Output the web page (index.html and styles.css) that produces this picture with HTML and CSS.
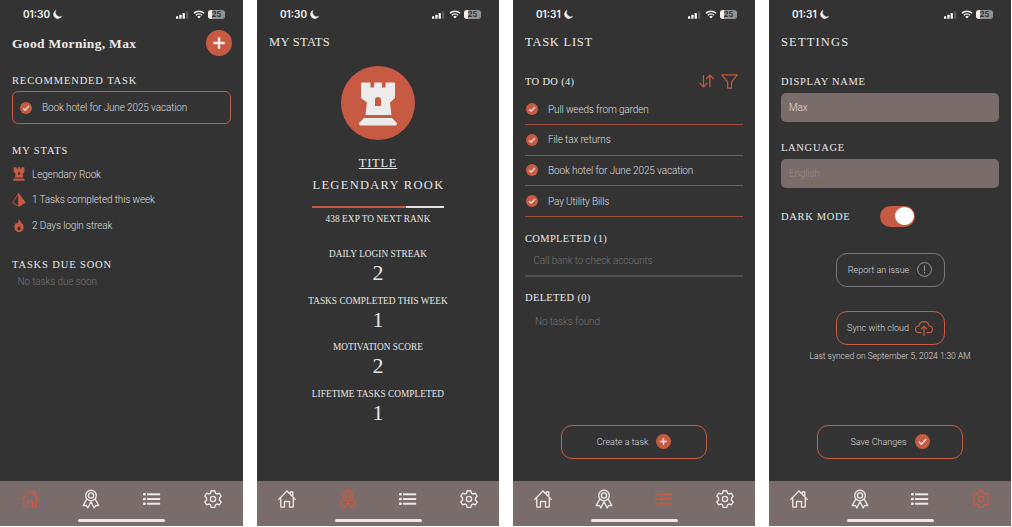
FILE: index.html
```
<!DOCTYPE html>
<html lang="en">
<head>
<meta charset="utf-8">
<title>Task Rook</title>
<link rel="stylesheet" href="styles.css">
</head>
<body>
<svg class="sprite" aria-hidden="true">
  <symbol id="moon" viewBox="0 0 9 9"><path d="M3 .3A4.400 4.400 0 1 0 8.800 6.300 4.400 4.400 0 0 1 3 .3z" fill="currentColor" stroke="currentColor" stroke-width=".4"/></symbol>
  <symbol id="signal" viewBox="0 0 13 8"><g fill="#f4f4f4"><rect x="0" y="5.2" width="2.3" height="2.6" rx=".5"/><rect x="3.3" y="3.8" width="2.3" height="4" rx=".5"/><rect x="6.6" y="2" width="2.3" height="5.8" rx=".5"/></g><rect x="10" y="0" width="2.1" height="7.8" rx=".5" fill="#5c5c5c"/></symbol>
  <symbol id="wifi" viewBox="0 0 12 9"><g fill="none" stroke="#f4f4f4" stroke-width="1.5"><path d="M.9 3.3a7.3 7.3 0 0 1 10.2 0"/><path d="M2.8 5.3a4.6 4.6 0 0 1 6.4 0"/></g><path d="M4.2 6.6a2.6 2.6 0 0 1 3.6 0L6 8.500z" fill="#f4f4f4"/></symbol>
  <symbol id="home" viewBox="0 0 18 18"><path d="M.7 9.400 9 1l8.300 8.400M2.700 7.800v9.300h3.800v-5.600h5v5.600h3.800V7.800M12.300 4V2h2.500v4.600" fill="none" stroke="currentColor" stroke-width="1.350" stroke-linejoin="round" stroke-linecap="round"/></symbol>
  <symbol id="award" viewBox="0 0 18 20"><g fill="none" stroke="currentColor" stroke-width="1.350" stroke-linejoin="round"><circle cx="9" cy="6.500" r="5.300"/><circle cx="9" cy="6.500" r="2.600"/><path d="M4.800 10 1.200 16.600l3.100-.2 1.500 2.600L9 12.800l3.200 6.200 1.500-2.600 3.100.2L13.200 10"/></g></symbol>
  <symbol id="list" viewBox="0 0 18 14"><g fill="currentColor"><rect x="0" y="1" width="2.800" height="2.600" rx=".8"/><rect x="0" y="5.700" width="2.800" height="2.600" rx=".8"/><rect x="0" y="10.400" width="2.800" height="2.600" rx=".8"/><rect x="4" y="1.300" width="13.200" height="2"/><rect x="4" y="6" width="13.200" height="2"/><rect x="4" y="10.700" width="13.200" height="2"/></g></symbol>
  <symbol id="gear" viewBox="0 0 18 18"><g fill="none" stroke="currentColor" stroke-width="1.350" stroke-linejoin="round"><path d="M7.200.7h3.600l.6 2.400 1.500.9 2.400-.9 1.900 3-1.800 1.800v2.200l1.800 1.800-1.900 3-2.400-.9-1.500.9-.6 2.400H7.200l-.6-2.400-1.500-.9-2.400.9-1.900-3 1.800-1.800V7.900L.8 6.100l1.900-3 2.400.9 1.500-.9z"/><circle cx="9" cy="9" r="2.600"/></g></symbol>
  <symbol id="rook" viewBox="0 0 38 44"><path fill="currentColor" fill-rule="evenodd" d="M3 .5h7.500a1 1 0 0 1 1 1V5.500h3.500V1.500a1 1 0 0 1 1-1h6a1 1 0 0 1 1 1V5.500h3.500V1.500a1 1 0 0 1 1-1H35a1 1 0 0 1 1 1V16l-5 4.500L32.500 33H6.500L8 20.500 2 16V1.500a1 1 0 0 1 1-1zM16 24h6v-6a3 3 0 0 0-6 0zM5 36h28l4.600 4.800a1.600 1.600 0 0 1-1.200 2.700H1.600a1.600 1.600 0 0 1-1.200-2.700z"/></symbol>
  <symbol id="pyramid" viewBox="0 0 14 14"><path d="M6.600.5.500 9.700l6.100 3.500z" fill="none" stroke="currentColor" stroke-width=".9" stroke-linejoin="round"/><path d="M6.800.3 13.700 9.500 7 13.700z" fill="currentColor"/></symbol>
  <symbol id="flame" viewBox="0 0 10 13"><path fill="currentColor" fill-rule="evenodd" d="M4.600 0C5.300 2 9.600 4.400 9.600 8.200 9.600 11 7.700 13 5 13S.4 11 .4 8.200C.4 6.200 1.400 4.600 2.300 3.800l.6 1C4 3.600 4.700 1.800 4.600 0zM5 7c-1 1-1.500 1.800-1.500 2.700 0 .9.6 1.600 1.500 1.600s1.500-.7 1.500-1.600C6.500 8.800 6 8 5 7z"/></symbol>
  <symbol id="check" viewBox="0 0 14 14"><circle cx="7" cy="7" r="7" fill="#c65a42"/><path d="m3.700 7.300 2.300 2.200 4.400-4.800" fill="none" stroke="#f3eae7" stroke-width="1.400"/></symbol>
  <symbol id="plus" viewBox="0 0 26 26"><circle cx="13" cy="13" r="13" fill="#c65a42"/><path d="M13 7.300v11.400M7.300 13h11.400" stroke="#f3eae7" stroke-width="2.400"/></symbol>
  <symbol id="sort" viewBox="0 0 16 14"><path d="M4.500 1v11.800M.8 9l3.700 3.800L8.200 9M10.900 13V1.200M7.200 5l3.700-3.800L14.700 5" fill="none" stroke="currentColor" stroke-width="1.200"/></symbol>
  <symbol id="funnel" viewBox="0 0 17 15"><path d="M.8.800h15.400l-5.700 7.300v6H6.700v-6z" fill="none" stroke="currentColor" stroke-width="1.200" stroke-linejoin="round"/></symbol>
  <symbol id="alert" viewBox="0 0 15 15"><circle cx="7.500" cy="7.500" r="6.900" fill="none" stroke="currentColor" stroke-width="1"/><path d="M7.500 3.600v5.300M7.500 10.100v1.300" stroke="currentColor" stroke-width="1.100"/></symbol>
  <symbol id="cloud" viewBox="0 0 18 15"><path d="M6.500 11.700H4A3.300 3.300 0 0 1 3.800 5C4.300 2.400 6.400.7 9 .7s4.700 1.700 5.100 4.300a3.300 3.300 0 0 1-.2 6.700h-2.400M9 14.700V5.500M6 8.300l3-3 3 3" fill="none" stroke="currentColor" stroke-width="1.200"/></symbol>
</svg>

<main class="screens">
  <section class="phone">
    <div class="status"><span class="time">01:30</span><svg class="moon"><use href="#moon"/></svg><span class="status-right"><svg class="signal"><use href="#signal"/></svg><svg class="wifi"><use href="#wifi"/></svg><span class="battery">25</span></span></div>
    <div class="content">
      <header class="greeting"><h1>Good Morning, Max</h1><svg class="add"><use href="#plus"/></svg></header>
      <h2 class="rec-title">RECOMMENDED TASK</h2>
      <div class="rec-card"><svg class="tick"><use href="#check"/></svg><span>Book hotel for June 2025 vacation</span></div>
      <h2 class="stats-title">MY STATS</h2>
      <ul class="stat-list">
        <li><svg class="i-rook" viewBox="0 0 38 44"><use href="#rook"/></svg>Legendary Rook</li>
        <li><svg class="i-pyramid"><use href="#pyramid"/></svg>1 Tasks completed this week</li>
        <li><svg class="i-flame"><use href="#flame"/></svg>2 Days login streak</li>
      </ul>
      <h2 class="due-title">TASKS DUE SOON</h2>
      <p class="due-empty">No tasks due soon</p>
    </div>
    <nav class="tabs"><div class="tab-row"><svg class="active"><use href="#home"/></svg><svg class="award"><use href="#award"/></svg><svg class="list"><use href="#list"/></svg><svg><use href="#gear"/></svg></div><i class="indicator"></i></nav>
  </section>

  <section class="phone">
    <div class="status"><span class="time">01:30</span><svg class="moon"><use href="#moon"/></svg><span class="status-right"><svg class="signal"><use href="#signal"/></svg><svg class="wifi"><use href="#wifi"/></svg><span class="battery">25</span></span></div>
    <div class="content">
      <h1 class="page-title tight">MY STATS</h1>
      <div class="profile">
        <div class="badge"><svg><use href="#rook"/></svg></div>
        <div class="rank-label">TITLE</div>
        <div class="rank">LEGENDARY ROOK</div>
        <div class="progress"><i></i></div>
        <div class="exp">438 EXP TO NEXT RANK</div>
        <dl class="metrics">
          <div><dt>DAILY LOGIN STREAK</dt><dd>2</dd></div>
          <div><dt>TASKS COMPLETED THIS WEEK</dt><dd>1</dd></div>
          <div><dt>MOTIVATION SCORE</dt><dd>2</dd></div>
          <div><dt>LIFETIME TASKS COMPLETED</dt><dd>1</dd></div>
        </dl>
      </div>
    </div>
    <nav class="tabs"><div class="tab-row"><svg><use href="#home"/></svg><svg class="award active"><use href="#award"/></svg><svg class="list"><use href="#list"/></svg><svg><use href="#gear"/></svg></div><i class="indicator"></i></nav>
  </section>

  <section class="phone">
    <div class="status"><span class="time">01:31</span><svg class="moon"><use href="#moon"/></svg><span class="status-right"><svg class="signal"><use href="#signal"/></svg><svg class="wifi"><use href="#wifi"/></svg><span class="battery">25</span></span></div>
    <div class="content">
      <h1 class="page-title">TASK LIST</h1>
      <div class="todo-head"><h2>TO DO (4)</h2><svg class="sort"><use href="#sort"/></svg><svg class="funnel"><use href="#funnel"/></svg></div>
      <ul class="tasks">
        <li><svg class="tick"><use href="#check"/></svg>Pull weeds from garden</li>
        <li><svg class="tick"><use href="#check"/></svg>File tax returns</li>
        <li><svg class="tick"><use href="#check"/></svg>Book hotel for June 2025 vacation</li>
        <li><svg class="tick"><use href="#check"/></svg>Pay Utility Bills</li>
      </ul>
      <h2 class="done-title">COMPLETED (1)</h2>
      <p class="done-item">Call bank to check accounts</p>
      <h2 class="deleted-title">DELETED (0)</h2>
      <p class="deleted-empty">No tasks found</p>
      <button class="btn wide bottom">Create a task<svg><use href="#plus"/></svg></button>
    </div>
    <nav class="tabs"><div class="tab-row"><svg><use href="#home"/></svg><svg class="award"><use href="#award"/></svg><svg class="list active"><use href="#list"/></svg><svg><use href="#gear"/></svg></div><i class="indicator"></i></nav>
  </section>

  <section class="phone">
    <div class="status"><span class="time">01:31</span><svg class="moon"><use href="#moon"/></svg><span class="status-right"><svg class="signal"><use href="#signal"/></svg><svg class="wifi"><use href="#wifi"/></svg><span class="battery">25</span></span></div>
    <div class="content">
      <h1 class="page-title loose">SETTINGS</h1>
      <h2 class="name-label">DISPLAY NAME</h2>
      <div class="field">Max</div>
      <h2 class="lang-label">LANGUAGE</h2>
      <div class="field disabled">English</div>
      <div class="dark-row"><h2>DARK MODE</h2><span class="toggle"><i></i></span></div>
      <button class="btn report">Report an issue<svg><use href="#alert"/></svg></button>
      <button class="btn sync">Sync with cloud<svg class="cloud"><use href="#cloud"/></svg></button>
      <p class="synced">Last synced on September 5, 2024 1:30 AM</p>
      <button class="btn wide bottom">Save Changes<svg><use href="#check"/></svg></button>
    </div>
    <nav class="tabs"><div class="tab-row"><svg><use href="#home"/></svg><svg class="award"><use href="#award"/></svg><svg class="list"><use href="#list"/></svg><svg class="active"><use href="#gear"/></svg></div><i class="indicator"></i></nav>
  </section>
</main>
</body>
</html>
```
FILE: styles.css
```
* { box-sizing: border-box; }
body, h1, h2, p, ul, dl, dd { margin: 0; padding: 0; }
body { background: #fff; overflow: hidden; font-family: Roboto, sans-serif; font-weight: 300; font-size: 10px; letter-spacing: -.13px; color: #dedede; }
ul { list-style: none; }
svg { display: block; flex: none; }
.sprite { display: none; }

.screens { display: grid; grid-template-columns: 243px 242px 242px 242px; gap: 14px; height: 526px; }
.phone { display: flex; flex-direction: column; background: #333; height: 526px; }
.content { flex: 1; min-height: 0; display: flex; flex-direction: column; padding: 0 12px; }

.status { display: flex; align-items: center; height: 29px; padding: 0 18px 0 23px; color: #f6f6f6; }
.time { font: 600 10px/29px Inter, sans-serif; letter-spacing: 0; }
.moon { width: 9px; height: 9px; margin-left: 3px; }
.status-right { display: flex; align-items: center; margin-left: auto; }
.signal { width: 13px; height: 8px; margin-right: 4px; }
.wifi { width: 12px; height: 9px; margin-right: 3px; }
.battery { width: 17px; height: 9px; border-radius: 3px; background: linear-gradient(90deg, #f4f4f4 4px, #929292 4px); color: #333; font: 700 7.500px/9px Inter, sans-serif; text-align: center; }

h1, h2, .profile { font-family: "Liberation Serif", serif; font-weight: 400; }
h2 { font-size: 10.500px; line-height: 14px; letter-spacing: .87px; color: #e8e8e8; }

.greeting { display: flex; align-items: center; justify-content: space-between; height: 26px; margin: 1px -1px 0 0; }
.greeting h1 { padding-top: 1px; font-size: 13.500px; line-height: 16px; font-weight: 700; letter-spacing: .32px; color: #ececec; }
.add { width: 26px; height: 26px; }
.rec-title { margin-top: 18px; }
.rec-card { display: flex; align-items: center; height: 33px; margin-top: 3px; padding-left: 7px; border: 1.300px solid #c65a42; border-radius: 6px; }
.tick { width: 12px; height: 12px; margin-right: 10px; }
.stats-title { margin-top: 20px; }
.stat-list { margin-top: 3.500px; }
.stat-list li { display: grid; grid-template-columns: 14px 1fr; column-gap: 6px; align-items: center; height: 25.500px; }
.stat-list svg { color: #c65a42; justify-self: center; }
.i-rook { width: 12px; height: 14px; }
.i-pyramid { width: 14px; height: 14px; }
.i-flame { width: 10px; height: 13px; }
.due-title { margin-top: 20px; }
.due-empty { margin: 3px 0 0 5.500px; line-height: 14px; color: #727272; }

.page-title { margin-top: 5px; font-size: 12.500px; line-height: 16px; letter-spacing: .75px; color: #e8e8e8; }
.page-title.tight { letter-spacing: .3px; }
.page-title.loose { letter-spacing: 1.150px; }

.profile { display: flex; flex-direction: column; align-items: center; color: #e6e6e6; }
.badge { display: grid; place-items: center; width: 74px; height: 74px; margin-top: 16px; padding-top: 2px; border-radius: 50%; background: #c65a42; color: #ececec; }
.badge svg { width: 38px; height: 44px; }
.rank-label { margin-top: 15px; font-size: 12.500px; line-height: 16px; letter-spacing: .75px; text-decoration: underline; text-underline-offset: 1px; text-decoration-thickness: 1px; }
.rank { margin-top: 6px; font-size: 12.500px; line-height: 16px; letter-spacing: 1.300px; margin-right: -1px; }
.progress { width: 132px; height: 2px; margin-top: 13px; background: #e9dfe9; }
.progress i { display: block; width: 71%; height: 2px; background: #c65a42; }
.exp { margin-top: 4px; font-size: 9.300px; line-height: 14px; letter-spacing: .07px; }
.metrics { display: grid; grid-auto-rows: 46.700px; margin-top: 21px; text-align: center; }
dt { font-size: 9.300px; line-height: 14px; letter-spacing: .04px; }
dd { margin-top: 3px; font-size: 22px; line-height: 18px; }

.todo-head { display: flex; align-items: center; height: 16px; margin-top: 23px; padding-right: 5px; color: #c65a42; }
.todo-head h2 { margin-right: auto; padding-top: 1px; }
.todo-head h2, .done-title, .deleted-title { letter-spacing: .32px; }
.sort { width: 16px; height: 14px; margin-right: 6px; }
.funnel { width: 17px; height: 15px; }
.tasks { margin-top: 5.200px; }
.tasks li { display: flex; align-items: center; height: 30.700px; padding-left: 1px; border-bottom: 1px solid #a04c3b; }
.done-title { margin-top: 15px; }
.done-item { height: 31px; margin-top: 0; padding: 8px 0 0 8.500px; line-height: 14px; color: #747474; border-bottom: 2px solid #505050; }
.deleted-title { margin-top: 14px; }
.deleted-empty { margin-top: 10.500px; padding-left: 10px; line-height: 14px; color: #727272; }

.btn { display: flex; align-items: center; justify-content: center; gap: 8px; align-self: center; width: 109px; height: 34px; flex: none; padding: 0; border: 1.300px solid #c65a42; border-radius: 11px; background: none; color: #dcdcdc; font: 300 9px Roboto, sans-serif; }
.btn svg { width: 15px; height: 15px; }
.btn.wide { width: 146px; }
.btn.bottom { margin: auto 0 22.500px; }

.name-label { margin-top: 25px; }
.name-label, .lang-label, .dark-row h2 { letter-spacing: .68px; }
.field { height: 29px; margin-top: 4px; padding-left: 8px; border-radius: 5px; background: #796c6b; line-height: 29px; color: #e4dfdf; }
.lang-label { margin-top: 19px; }
.field.disabled { margin-top: 3.500px; color: #958a89; }
.dark-row { display: flex; align-items: center; height: 21px; margin-top: 18px; }
.dark-row h2 { width: 70px; padding-top: 1px; white-space: nowrap; }
.toggle { width: 35px; height: 21px; margin-left: 29px; padding: 1.200px; border-radius: 11px; background: #c65a42; }
.toggle i { display: block; width: 18.600px; height: 18.600px; margin-left: auto; border-radius: 50%; background: #fff; }
.report { margin-top: 26px; border-color: #777; }
.report svg { color: #999; }
.sync { margin-top: 24.500px; gap: 6px; }
.btn .cloud { width: 18px; height: 15px; color: #c65a42; }
.synced { margin-top: 4px; font-size: 8.500px; line-height: 14px; letter-spacing: 0; text-align: center; }

.tabs { height: 45px; flex: none; display: flex; flex-direction: column; align-items: center; background: #796c6b; color: #ece7e4; }
.tab-row { display: flex; justify-content: space-between; align-items: center; align-self: stretch; height: 36px; padding: 0 21px; }
.tab-row svg { width: 18px; height: 18px; }
.tab-row .award { height: 20px; }
.tab-row .list { height: 14px; }
.tab-row .active { color: #c65a42; }
.indicator { width: 87px; height: 3px; margin-top: 1.500px; border-radius: 2px; background: #ebe7e3; }
```
